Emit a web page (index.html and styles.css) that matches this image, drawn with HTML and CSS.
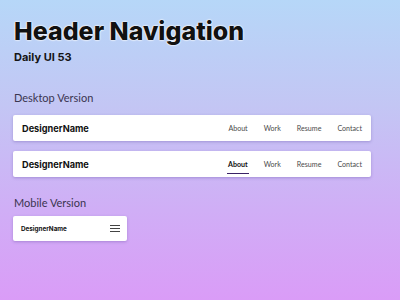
FILE: index.html
```html
<!DOCTYPE html>
<html lang="en">
<head>
    <meta charset="UTF-8">
    <meta name="viewport" content="width=device-width, initial-scale=1.0">
    <title>Header Navigation</title>
    <link rel="stylesheet" href="styles.css">
</head>
<body>
<div class="page">
    <div class="page-title">Header Navigation</div>
    <div class="subtitle">Daily UI 53</div>

    <div class="section-label">Desktop Version</div>
    <div class="navbar">
        <div class="brand">DesignerName</div>
        <div class="nav-links">
            <span class="nav-link">About</span>
            <span class="nav-link">Work</span>
            <span class="nav-link">Resume</span>
            <span class="nav-link">Contact</span>
        </div>
    </div>
    <div class="navbar">
        <div class="brand">DesignerName</div>
        <div class="nav-links">
            <span class="nav-link active">About</span>
            <span class="nav-link">Work</span>
            <span class="nav-link">Resume</span>
            <span class="nav-link">Contact</span>
        </div>
    </div>

    <div class="section-label mobile-label">Mobile Version</div>
    <div class="navbar mobile">
        <div class="brand">DesignerName</div>
        <div class="burger">
            <span></span>
            <span></span>
            <span></span>
        </div>
    </div>
</div>
</body>
</html>
```

FILE: styles.css
```css
html, body {
    height: 100%;
}
body {
    margin: 0;
    font-family: "Lato", "Open Sans", sans-serif;
    color: #222;
    background: linear-gradient(180deg, #b6d7f8 0%, #c3c6f4 35%, #d0aef6 70%, #da9cf7 100%);
}
.page {
    padding: 16px 13px 0 13px;
}
.page-title {
    font-family: "Inter", sans-serif;
    font-size: 25px;
    font-weight: 800;
    line-height: 30px;
    color: #111;
    padding-left: 1px;
    text-shadow: 0 0 2px #fff, 0 0 2px #fff, 0 0 1px #fff;
}
.subtitle {
    font-family: "Inter", sans-serif;
    font-size: 11px;
    font-weight: 700;
    line-height: 14px;
    margin-top: 4px;
    padding-left: 1px;
    color: #151515;
}
.section-label {
    font-size: 11px;
    color: #3a3550;
    margin-top: 27px;
    padding-left: 1px;
    line-height: 14px;
}
.mobile-label {
    margin-top: 19px;
}
.navbar {
    width: 358px;
    height: 26px;
    box-sizing: border-box;
    background: #fff;
    border-radius: 2px;
    box-shadow: 0 1px 3px rgba(70, 50, 140, 0.3);
    display: flex;
    align-items: center;
    justify-content: space-between;
    padding: 0 9px 0 9px;
    margin-top: 10px;
}
.brand {
    font-family: "Inter", sans-serif;
    font-size: 9.2px;
    font-weight: 700;
    color: #111;
}
.nav-links {
    display: flex;
    gap: 16px;
}
.nav-link {
    font-size: 7.1px;
    color: #4a4a4a;
    position: relative;
}
.nav-link.active {
    font-weight: 700;
    color: #111;
}
.nav-link.active::after {
    content: "";
    position: absolute;
    left: -1px;
    right: -1px;
    bottom: -5px;
    height: 1px;
    background: #3a2266;
}
.navbar.mobile {
    width: 114px;
    height: 25px;
    margin-top: 6px;
    padding: 0 7px 0 8px;
}
.navbar.mobile .brand {
    font-size: 6.3px;
}
.burger {
    display: flex;
    flex-direction: column;
    gap: 2px;
}
.burger span {
    display: block;
    width: 10px;
    height: 1px;
    background: #444;
}
```
